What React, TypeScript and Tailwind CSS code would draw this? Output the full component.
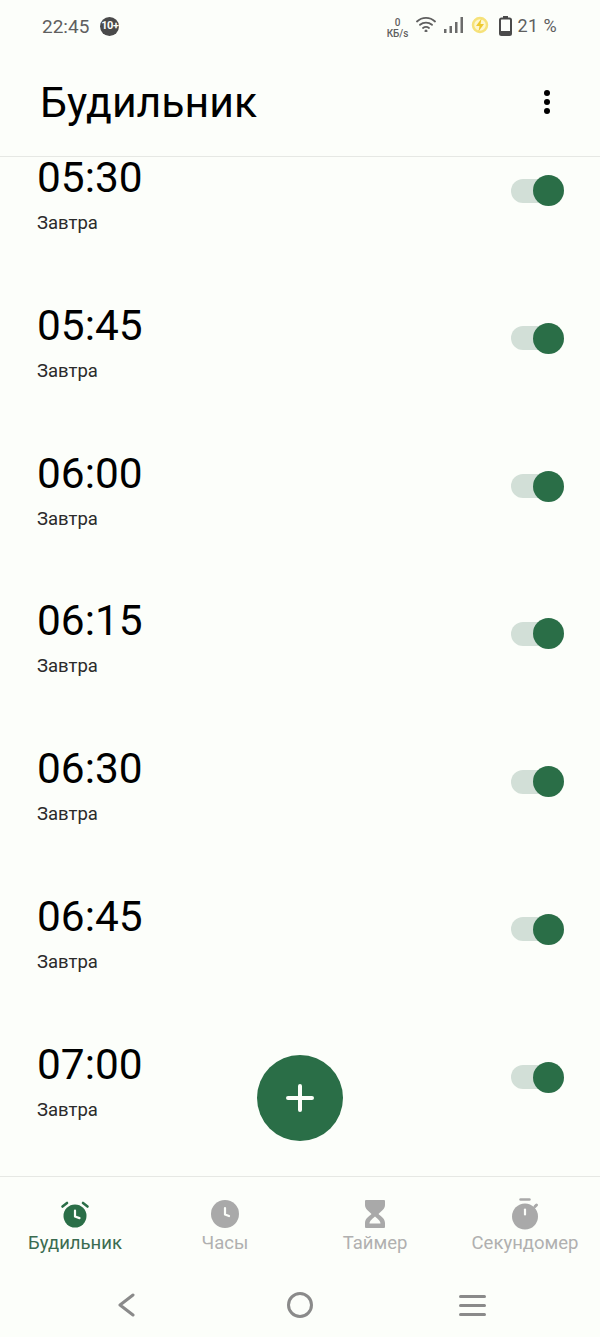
import React from 'react';

const alarms = ['05:30', '05:45', '06:00', '06:15', '06:30', '06:45', '07:00'];

const AlarmIcon = () => (
  <svg width="30" height="32" viewBox="0 0 30 32">
    <circle cx="15" cy="18" r="11.5" fill="#2a6e47" />
    <path d="M2.500 8.500 7 5M27.500 8.500 23 5" stroke="#2a6e47" strokeWidth="2.600" strokeLinecap="round" />
    <path d="M15 12.500v6l4.500 1.600" fill="none" stroke="#fcfefa" strokeWidth="2.200" strokeLinecap="round" strokeLinejoin="round" />
  </svg>
);

const ClockIcon = () => (
  <svg width="30" height="30" viewBox="0 0 30 30">
    <circle cx="15" cy="15" r="14" fill="#a9a9a9" />
    <path d="M15 9v6.500l4 1.500" fill="none" stroke="#fcfefa" strokeWidth="2.200" strokeLinecap="round" strokeLinejoin="round" />
  </svg>
);

const HourglassIcon = () => (
  <svg width="20" height="28" viewBox="0 0 20 28">
    <path fillRule="evenodd" fill="#a9a9a9" d="M1 0h18a1 1 0 0 1 1 1v4c0 4-4 6.500-6.500 9 2.500 2.500 6.500 4.500 6.500 9v4a1 1 0 0 1-1 1H1a1 1 0 0 1-1-1v-4c0-4.500 4-6.500 6.500-9C4 11.500 0 9 0 5V1a1 1 0 0 1 1-1Zm9 16.500c-2 2-5.500 4-5.500 7h11c0-3-3.500-5-5.500-7Z" />
  </svg>
);

const StopwatchIcon = () => (
  <svg width="30" height="32" viewBox="0 0 30 32">
    <circle cx="15" cy="18.500" r="13" fill="#a9a9a9" />
    <path d="M10.500 1.500h9" stroke="#a9a9a9" strokeWidth="2.400" strokeLinecap="round" />
    <path d="M25 8.500 26.500 7" stroke="#a9a9a9" strokeWidth="3" strokeLinecap="round" />
    <path d="M15 11.500v5" stroke="#fcfefa" strokeWidth="2.200" strokeLinecap="round" />
  </svg>
);

const tabs = [
  { label: 'Будильник', icon: <AlarmIcon />, active: true },
  { label: 'Часы', icon: <ClockIcon />, active: false },
  { label: 'Таймер', icon: <HourglassIcon />, active: false },
  { label: 'Секундомер', icon: <StopwatchIcon />, active: false },
];

const StatusBar = () => (
  <div className="h-[52px] shrink-0 flex items-center justify-between pl-[42px] pr-[43px] text-[#5f5f5f]">
    <div className="flex items-center gap-[11px]">
      <span className="text-[19px] leading-none">22:45</span>
      <span className="w-[19px] h-[19px] rounded-full bg-[#4a4a4a] text-[#fcfefa] text-[11px] font-bold tracking-[-0.5px] flex items-center justify-center">10+</span>
    </div>
    <div className="flex items-center">
      <div className="w-[22px] flex flex-col items-center text-[10px] leading-[11px] font-medium mt-[3px]">
        <span>0</span>
        <span>КБ/s</span>
      </div>
      <svg className="ml-[7px] mb-[5px]" width="20" height="16" viewBox="0 0 20 16" fill="none" stroke="#5f5f5f" strokeWidth="1.800" strokeLinecap="round">
        <path d="M1 5.500c5-4.800 13-4.800 18 0" />
        <path d="M4 8.800c3.500-3 8.500-3 12 0" />
        <path d="M7 12c1.800-1.400 4.200-1.400 6 0" />
        <circle cx="10" cy="15" r=".6" fill="#5f5f5f" />
      </svg>
      <svg className="ml-[8px] mb-[2px]" width="19" height="16" viewBox="0 0 19 16" fill="#6b6b6b">
        <rect x="0" y="12" width="2.500" height="4" />
        <rect x="5.500" y="9" width="2.500" height="7" />
        <rect x="11" y="5" width="2.500" height="11" />
        <rect x="16.500" y="0" width="2.500" height="16" />
      </svg>
      <svg className="ml-[8px] mb-[2px]" width="18" height="18" viewBox="0 0 18 18">
        <circle cx="9" cy="9" r="7" fill="#fdf6cf" stroke="#f6e27a" strokeWidth="2.500" />
        <path d="M10.500 2.500 5 10h3.500l-1 5.500L13 8H9.500Z" fill="#eec92f" />
      </svg>
      <svg className="ml-[10px]" width="13" height="20" viewBox="0 0 13 20">
        <path d="M4 0h5v2H4Z" fill="#4a4a4a" />
        <rect x="1" y="2.500" width="11" height="16.500" rx="1.500" fill="none" stroke="#4a4a4a" strokeWidth="2" />
        <rect x="1" y="15" width="11" height="4" fill="#4a4a4a" />
      </svg>
      <span className="ml-[6px] text-[18px] leading-none tracking-[0.4px]">21 %</span>
    </div>
  </div>
);

const Toggle = () => (
  <div className="relative w-[52.500px] h-[24px] mt-[25.500px]">
    <div className="w-[48px] h-[24px] rounded-full bg-[#d2dfd7]" />
    <div className="absolute right-0 top-[-3.500px] w-[31px] h-[31px] rounded-full bg-[#2a6e47]" />
  </div>
);

const AlarmRow = ({ time }: { time: string }) => (
  <div className="h-[147.75px] shrink-0 flex items-start justify-between pl-[37px] pr-[36.500px] pt-[37px]">
    <div className="flex flex-col">
      <span className="text-[42.4px] leading-[50px] text-black">{time}</span>
      <span className="text-[18.5px] leading-[24px] mt-[8px] text-[#2b2b2b]">Завтра</span>
    </div>
    <Toggle />
  </div>
);

export default function App() {
  return (
    <div className="relative w-[600px] h-[1337px] overflow-hidden flex flex-col bg-[#fcfefa] font-['Roboto',sans-serif]">
      <StatusBar />

      <header className="h-[105px] shrink-0 flex items-center justify-between pl-[40px] pr-[50px] border-b border-[#e6e8e4]">
        <h1 className="text-[42.800px] leading-none text-black mb-[4px]">Будильник</h1>
        <div className="flex flex-col gap-[3.300px] mb-[4px]">
          <span className="w-[6px] h-[6px] rounded-full bg-black" />
          <span className="w-[6px] h-[6px] rounded-full bg-black" />
          <span className="w-[6px] h-[6px] rounded-full bg-black" />
        </div>
      </header>

      <main className="flex-1 min-h-0 overflow-hidden">
        <div className="flex flex-col -mt-[41px]">
          {alarms.map((t) => (
            <AlarmRow key={t} time={t} />
          ))}
        </div>
      </main>

      <button className="absolute left-[257px] top-[1055px] w-[86px] h-[86px] rounded-full bg-[#2a6e47] flex items-center justify-center">
        <svg width="30" height="30" viewBox="0 0 30 30" stroke="#fcfefa" strokeWidth="4" strokeLinecap="round">
          <path d="M15 3v24M3 15h24" />
        </svg>
      </button>

      <nav className="h-[94px] shrink-0 grid grid-cols-4 border-t border-[#e6e8e4]">
        {tabs.map((tab) => (
          <div key={tab.label} className="flex flex-col items-center">
            <div className="h-[32px] mt-[21px] flex items-center justify-center">{tab.icon}</div>
            <span className={`text-[18.500px] leading-[24px] mt-[1px] ${tab.active ? 'text-[#3a6b50]' : 'text-[#b0b0b0]'}`}>{tab.label}</span>
          </div>
        ))}
      </nav>

      <div className="h-[67px] shrink-0 grid grid-cols-3 items-center pt-[3px]">
        <div className="flex justify-end pr-[65px]">
          <svg width="17" height="24" viewBox="0 0 17 24" fill="none" stroke="#8a8a8a" strokeWidth="3" strokeLinecap="round" strokeLinejoin="round">
            <path d="M15 2 2 12l13 10" />
          </svg>
        </div>
        <div className="flex justify-center">
          <span className="w-[26px] h-[26px] rounded-full border-[3.500px] border-[#8a8a8a]" />
        </div>
        <div className="flex flex-col gap-[6px] pl-[59px]">
          <span className="w-[27px] h-[3px] rounded-full bg-[#8a8a8a]" />
          <span className="w-[27px] h-[3px] rounded-full bg-[#8a8a8a]" />
          <span className="w-[27px] h-[3px] rounded-full bg-[#8a8a8a]" />
        </div>
      </div>
    </div>
  );
}
